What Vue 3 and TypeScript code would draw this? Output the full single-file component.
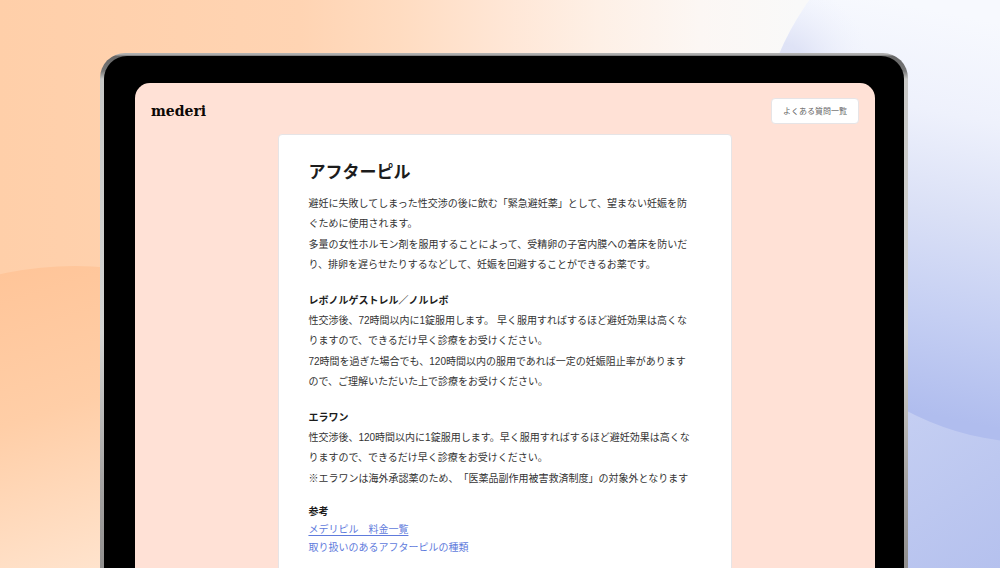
<script setup lang="ts">
interface Section {
  title: string
  paragraphs: string[]
}

const intro: string[] = [
  '避妊に失敗してしまった性交渉の後に飲む「緊急避妊薬」として、望まない妊娠を防\nぐために使用されます。',
  '多量の女性ホルモン剤を服用することによって、受精卵の子宮内膜への着床を防いだ\nり、排卵を遅らせたりするなどして、妊娠を回避することができるお薬です。',
]

const sections: Section[] = [
  {
    title: 'レボノルゲストレル／ノルレボ',
    paragraphs: [
      '性交渉後、72時間以内に1錠服用します。 早く服用すればするほど避妊効果は高くな\nりますので、できるだけ早く診療をお受けください。',
      '72時間を過ぎた場合でも、120時間以内の服用であれば一定の妊娠阻止率があります\nので、ご理解いただいた上で診療をお受けください。',
    ],
  },
  {
    title: 'エラワン',
    paragraphs: [
      '性交渉後、120時間以内に1錠服用します。早く服用すればするほど避妊効果は高くな\nりますので、できるだけ早く診療をお受けください。',
      '※エラワンは海外承認薬のため、「医薬品副作用被害救済制度」の対象外となります',
    ],
  },
]
</script>

<template>
  <div class="stage">
    <svg class="backdrop" viewBox="0 0 1000 568" preserveAspectRatio="none" aria-hidden="true">
      <defs>
        <linearGradient id="base" x1="0" y1="0" x2="1" y2="0">
          <stop offset="0" stop-color="#ffcfa9" />
          <stop offset="0.3" stop-color="#ffd4b3" />
          <stop offset="0.4" stop-color="#ffdcc1" />
          <stop offset="0.5" stop-color="#ffe6d5" />
          <stop offset="0.6" stop-color="#fef0e6" />
          <stop offset="0.7" stop-color="#fcf7f4" />
          <stop offset="0.8" stop-color="#f9f9f9" />
          <stop offset="1" stop-color="#f8f8fa" />
        </linearGradient>
        <linearGradient id="warm" x1="10" y1="270" x2="110" y2="580" gradientUnits="userSpaceOnUse">
          <stop offset="0" stop-color="#ffc599" />
          <stop offset="0.45" stop-color="#ffcea7" />
          <stop offset="1" stop-color="#ffe5d0" />
        </linearGradient>
        <linearGradient id="cool" x1="985" y1="20" x2="905" y2="410" gradientUnits="userSpaceOnUse">
          <stop offset="0" stop-color="#f7f9fe" />
          <stop offset="0.25" stop-color="#eef1fc" />
          <stop offset="0.5" stop-color="#dae0f6" />
          <stop offset="0.75" stop-color="#c5cff3" />
          <stop offset="1" stop-color="#b0bdee" />
        </linearGradient>
        <radialGradient id="edge" cx="780" cy="70" r="90" gradientUnits="userSpaceOnUse">
          <stop offset="0" stop-color="#dde0f4" />
          <stop offset="0.3" stop-color="#dfe3f6" />
          <stop offset="1" stop-color="#eff2fd" stop-opacity="0" />
        </radialGradient>
        <linearGradient id="low" x1="905" y1="420" x2="1000" y2="568" gradientUnits="userSpaceOnUse">
          <stop offset="0" stop-color="#c4cef2" />
          <stop offset="1" stop-color="#b5c1ee" />
        </linearGradient>
      </defs>
      <rect width="1000" height="568" fill="url(#base)" />
      <circle cx="75" cy="616" r="350" fill="url(#warm)" />
      <rect x="860" y="300" width="140" height="268" fill="url(#low)" />
      <circle cx="1037" cy="163" r="280" fill="url(#cool)" />
      <circle cx="1037" cy="163" r="280" fill="url(#edge)" />
    </svg>

    <div class="device">
      <div class="bezel">
        <div class="screen">
          <header class="topbar">
            <span class="logo">mederi</span>
            <button type="button" class="faq">よくある質問一覧</button>
          </header>
          <main class="card">
            <h1>アフターピル</h1>
            <div class="copy">
              <p v-for="text in intro" :key="text">{{ text }}</p>
            </div>
            <section v-for="section in sections" :key="section.title">
              <h2>{{ section.title }}</h2>
              <div class="copy">
                <p v-for="text in section.paragraphs" :key="text">{{ text }}</p>
              </div>
            </section>
            <section class="refs">
              <h2>参考</h2>
              <a href="#price" class="underlined">メデリピル　料金一覧</a>
              <a href="#types">取り扱いのあるアフターピルの種類</a>
            </section>
          </main>
        </div>
      </div>
    </div>
  </div>
</template>

<style>
body {
  margin: 0;
}
</style>

<style scoped>
.stage {
  position: relative;
  box-sizing: border-box;
  height: 100vh;
  overflow: hidden;
  padding: 53px 92px 0 100px;
  font-family: "Liberation Sans", "Noto Sans CJK JP", sans-serif;
  text-spacing-trim: space-all;
  color: #333;
}

.backdrop {
  position: absolute;
  inset: 0;
  width: 100%;
  height: 100%;
}

.device {
  position: relative;
  box-sizing: border-box;
  min-height: 100%;
  padding: 3px 4px 0;
  border-radius: 25px 25px 0 0;
  background: linear-gradient(#b4b4b4, #a8a8a8 2px, #666 3px, #777 18px, #c8c8c6 26px, #d4d4d2 280px, #a5a3a2 430px, #918f8e 515px);
}

.bezel {
  padding: 27px 29px 0 31px;
  border-radius: 23px 23px 0 0;
  background: #000;
}

.screen {
  min-height: 100vh;
  padding: 15px 16px 0;
  border-radius: 15px 15px 0 0;
  background: #ffe1d6;
}

.topbar {
  display: flex;
  align-items: center;
  justify-content: space-between;
}

.logo {
  font: bold 14px/26px "DejaVu Serif", serif;
  color: #0c0805;
}

.faq {
  height: 26px;
  padding: 0 11px;
  border: 1px solid #e6e4e6;
  border-radius: 4px;
  background: #fff;
  color: #666;
  font: 8px/12px "Noto Sans CJK JP", sans-serif;
}

.card {
  box-sizing: border-box;
  width: 64%;
  min-height: 100vh;
  margin: 10px auto 0;
  padding: 25px 24px 0 29px;
  border: 1px solid #e6e4e6;
  border-radius: 4px;
  background: #fff;
}

h1 {
  margin: 0 0 9px;
  font-size: 17px;
  line-height: 25px;
  color: #1c1c1c;
}

.copy {
  display: grid;
  gap: 1px;
}

p {
  margin: 0;
  font-size: 10px;
  line-height: 20px;
  white-space: pre;
}

section {
  margin-top: 16px;
}

h2 {
  margin: 0;
  font-size: 10px;
  line-height: 20px;
  color: #1c1c1c;
}

.refs {
  display: grid;
  justify-items: start;
  margin-top: 14px;
  font-size: 10px;
  line-height: 18px;
}

.refs h2 {
  line-height: 18px;
}

.refs a {
  color: #5f7bdc;
  text-decoration: none;
}

.refs .underlined {
  text-decoration: underline;
  text-underline-offset: 2px;
}
</style>
